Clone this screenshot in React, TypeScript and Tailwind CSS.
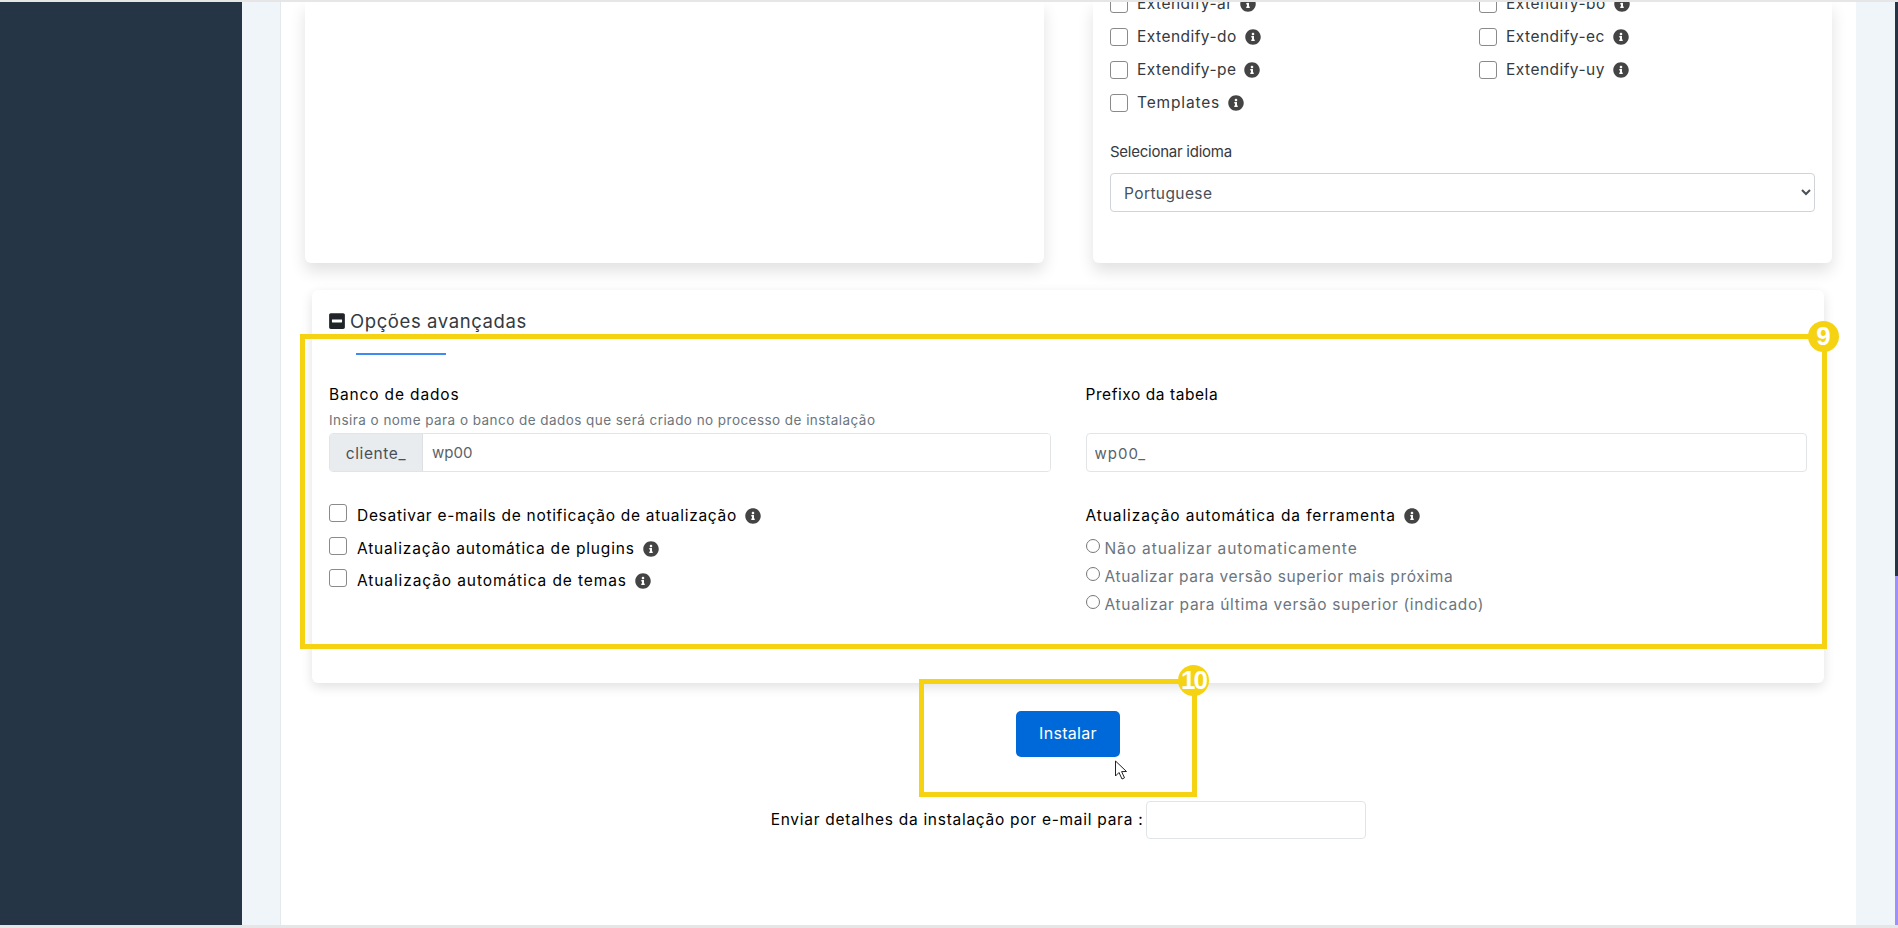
import React from "react";
import { FaInfoCircle, FaMinusSquare } from "react-icons/fa";

function Info() {
  return <FaInfoCircle className="ml-[8px] h-[16px] w-[16px] shrink-0 text-[#444444]" />;
}

function Box() {
  return <input type="checkbox" readOnly className="h-[18px] w-[18px] shrink-0 appearance-none rounded-[3px] border-[1.5px] border-[#8a8a8a] bg-white" />;
}

function Ext({ name, track = "tracking-[0.46px]" }: { name: string; track?: string }) {
  return (
    <div className="flex h-[33px] items-center">
      <Box />
      <span className={"ml-[9px] text-[15.5px] text-[#343a40] " + track}>{name}</span>
      <Info />
    </div>
  );
}

function CheckRow({ label, track }: { label: string; track: string }) {
  return (
    <div className="flex h-[32.5px] items-start">
      <Box />
      <span className={"ml-[10px] flex h-6 items-center text-[15.5px] text-black " + track}>
        {label}
        <Info />
      </span>
    </div>
  );
}

function Radio({ label, track }: { label: string; track: string }) {
  return (
    <div className="flex h-7 items-center">
      <span className="-mt-1 h-[14px] w-[14px] shrink-0 rounded-full border border-[#777777] bg-white" />
      <span className={"ml-[5px] mt-[1px] text-[15.5px] text-[#6c757d] " + track}>{label}</span>
    </div>
  );
}

function Badge({ text, className }: { text: string; className: string }) {
  return (
    <span className={"absolute -right-[17px] flex h-[31px] w-[31px] items-center justify-center rounded-full bg-[#f5d312] font-['Liberation_Sans',sans-serif] text-[26px] font-bold text-white " + className}>
      {text}
    </span>
  );
}

export default function App() {
  return (
    <div className="relative flex h-[928px] w-[1898px] flex-col overflow-hidden bg-[#f0f5fa] font-['Inter',sans-serif]">
      <div className="h-[2px] shrink-0 bg-[#e6e6e6]" />
      <div className="flex min-h-0 flex-1">
        <aside className="w-[242px] shrink-0 bg-[#253545]" />
        <main className="flex min-w-0 flex-1 pl-[38px] pr-[39px]">
          <section className="relative w-[1576px] overflow-hidden bg-white pl-[25px] pr-[24px] shadow-[inset_1px_0_0_#e4e9ee]">
            <div className="grid h-[261px] grid-cols-2 gap-x-[49px]">
              <div className="rounded-b-md bg-white shadow-[0_8px_16px_rgba(0,0,0,0.12)]" />
              <div className="rounded-b-md bg-white px-[17px] shadow-[0_8px_16px_rgba(0,0,0,0.12)]">
                <div className="-mt-[15px] grid grid-cols-[369px_1fr]">
                  <Ext name="Extendify-ar" />
                  <Ext name="Extendify-bo" />
                  <Ext name="Extendify-do" />
                  <Ext name="Extendify-ec" />
                  <Ext name="Extendify-pe" />
                  <Ext name="Extendify-uy" />
                  <Ext name="Templates" track="tracking-[0.85px]" />
                </div>
                <label className="mt-[21px] block h-6 text-[15px] leading-6 tracking-[-0.25px] text-[#343a40]">Selecionar idioma</label>
                <select defaultValue="Portuguese" className="mt-[9px] block h-[39px] w-[705px] rounded-[4px] border border-[#ced4da] bg-white pl-[9px] pt-[2px] text-[15.5px] tracking-[0.4px] text-[#495057]">
                  <option>Portuguese</option>
                </select>
              </div>
            </div>

            <div className="ml-[7px] mr-[8px] mt-[27px] h-[393px] rounded-md bg-white pl-[17px] pr-[17px] pt-[19px] shadow-[0_4px_12px_rgba(0,0,0,0.12)]">
              <div className="flex h-6 items-center">
                <FaMinusSquare className="h-[18px] w-[16px] text-[#212529]" />
                <span className="ml-[5px] mt-[1px] text-[18.5px] tracking-[0.6px] text-[#343a40]">Opções avançadas</span>
              </div>
              <div className="ml-[27px] mt-[20px] h-[2px] w-[90px] bg-[#3d8bf0]" />

              <div className="mt-[28px] grid grid-cols-2 gap-x-[35px]">
                <div>
                  <div className="h-6 text-[15.5px] leading-6 tracking-[0.85px] text-black">Banco de dados</div>
                  <div className="mt-[4px] h-[18px] text-[13.5px] leading-[18px] tracking-[0.45px] text-[#6c757d]">Insira o nome para o banco de dados que será criado no processo de instalação</div>
                  <div className="mt-[4px] flex h-[39px] overflow-hidden rounded-[4px] border border-[#e2e5e8]">
                    <span className="flex w-[93px] items-center justify-center border-r border-[#dcdfe3] bg-[#e9ecef] pt-[2px] text-[15.5px] tracking-[0.6px] text-[#495057]">cliente_</span>
                    <input readOnly defaultValue="wp00" className="min-w-0 flex-1 bg-white pl-[9px] pt-[2px] text-[15px] text-[#5a6268] outline-none" />
                  </div>
                </div>
                <div>
                  <div className="h-6 text-[15.5px] leading-6 tracking-[0.56px] text-black">Prefixo da tabela</div>
                  <input readOnly defaultValue="wp00_" className="mt-[26px] block h-[39px] w-full rounded-[4px] border border-[#e2e5e8] bg-white pl-[8px] pt-[2px] text-[15px] tracking-[1px] text-[#5a6268] outline-none" />
                </div>
                <div className="mt-[32px]">
                  <CheckRow label="Desativar e-mails de notificação de atualização" track="tracking-[0.7px]" />
                  <CheckRow label="Atualização automática de plugins" track="tracking-[0.82px]" />
                  <CheckRow label="Atualização automática de temas" track="tracking-[0.9px]" />
                </div>
                <div className="mt-[32px]">
                  <div className="flex h-6 items-center text-[15.5px] tracking-[0.9px] text-black">
                    Atualização automática da ferramenta
                    <Info />
                  </div>
                  <div className="mt-[6px]">
                    <Radio label="Não atualizar automaticamente" track="tracking-[0.89px]" />
                    <Radio label="Atualizar para versão superior mais próxima" track="tracking-[0.63px]" />
                    <Radio label="Atualizar para última versão superior (indicado)" track="tracking-[0.68px]" />
                  </div>
                </div>
              </div>
            </div>

            <div className="mt-[28px] flex justify-center pr-[1px]">
              <button className="h-[46px] w-[104px] rounded-[5px] bg-[#0069d9] pb-[2px] text-[16px] tracking-[0.3px] text-white">Instalar</button>
            </div>
            <div className="mt-[44px] flex items-center justify-center">
              <span className="mr-[3px] text-[15.5px] tracking-[0.72px] text-black">Enviar detalhes da instalação por e-mail para :</span>
              <input readOnly className="h-[38px] w-[220px] rounded-[4px] border border-[#e2e5e8] bg-white" />
            </div>
          </section>
        </main>
        <div className="flex w-[3px] shrink-0 flex-col">
          <div className="h-[574px] bg-[#253545]" />
          <div className="flex-1 bg-[#a08fff]" />
        </div>
      </div>
      <div className="h-[3px] shrink-0 bg-[#e6e6e6]" />

      <div className="absolute left-[300px] top-[334px] h-[315px] w-[1527px] border-[5px] border-[#f5d312]">
        <Badge text="9" className="-top-[18px]" />
      </div>
      <div className="absolute left-[919px] top-[679px] h-[118px] w-[278px] border-[5px] border-[#f5d312]">
        <Badge text="10" className="-top-[19px] tracking-[-2px]" />
      </div>
      <svg className="absolute left-[1114px] top-[760px]" width="14" height="20" viewBox="0 0 14 20">
        <path d="M1.5 1 V16 L5 12.5 L8 19 L10.5 17.8 L7.6 11.6 L12.5 11.5 Z" fill="#fff" stroke="#222" strokeWidth="1" />
      </svg>
    </div>
  );
}
